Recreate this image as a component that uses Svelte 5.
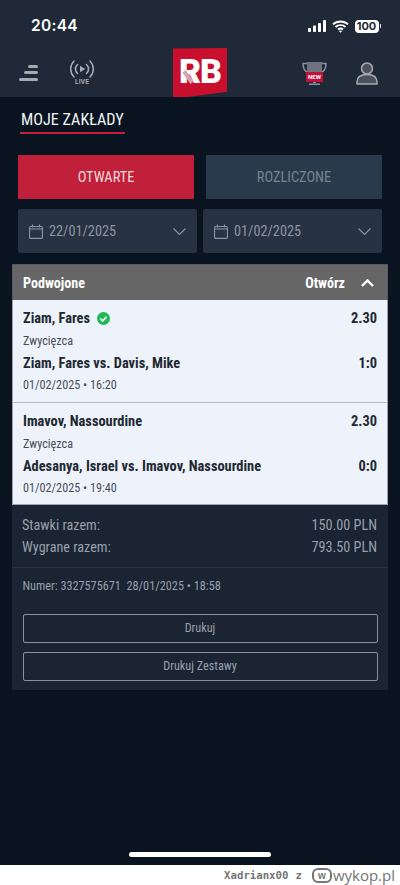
<script>
  const bets = [
    { name: 'Ziam, Fares', check: true, odds: '2.30', match: 'Ziam, Fares vs. Davis, Mike', score: '1:0', date: '01/02/2025 • 16:20' },
    { name: 'Imavov, Nassourdine', check: false, odds: '2.30', match: 'Adesanya, Israel vs. Imavov, Nassourdine', score: '0:0', date: '01/02/2025 • 19:40' }
  ];
  const dates = ['22/01/2025', '01/02/2025'];
</script>

<div class="page">
  <header class="top">
    <div class="status">
      <span class="time">20:44</span>
      <div class="sys">
        <svg width="18" height="12" viewBox="0 0 18 12"><rect x="0" y="8" width="3" height="4" rx=".8"/><rect x="5" y="5.500" width="3" height="6.500" rx=".8"/><rect x="10" y="3" width="3" height="9" rx=".8"/><rect x="15" y="0" width="3" height="12" rx=".8"/></svg>
        <svg class="wifi" width="17" height="13" viewBox="0 0 17 13"><path d="M1 4.400C5.200.6 11.800.6 16 4.400M3.500 7C6.400 4.500 10.600 4.500 13.500 7M6 9.500C7.400 8.400 9.600 8.400 11 9.500" fill="none" stroke="#fff" stroke-width="1.900"/><path d="M8.500 12.800 6.800 10.900c1-.7 2.400-.7 3.400 0z"/></svg>
        <span class="batt">100</span><i class="nub"></i>
      </div>
    </div>
    <nav class="nav">
      <div class="nav-left">
        <svg width="19" height="16" viewBox="0 0 19 16"><g fill="#a5abb4"><rect x="9" y="0" width="10" height="3" rx="1.500"/><rect x="5" y="6" width="14" height="3" rx="1.500"/><rect x="0" y="13" width="19" height="3" rx="1.500"/></g></svg>
        <div class="live">
          <svg width="26" height="18" viewBox="0 0 26 18" fill="none" stroke="#a5abb4" stroke-width="1.500" stroke-linecap="round"><path d="M5 1C.6 5.500.6 12.500 5 17M21 1c4.400 4.500 4.400 11.500 0 16M8.500 4.500c-2.500 2.700-2.500 6.300 0 9M17.500 4.500c2.500 2.700 2.500 6.300 0 9"/><path d="M11 5.800v6.400l5.200-3.200z" fill="#a5abb4" stroke="none"/></svg>
          <span>LIVE</span>
        </div>
      </div>
      <div class="nav-right">
        <div class="trophy">
          <svg width="25" height="25" viewBox="0 0 25 25"><path d="M5 1h15v8c0 4-3 7-7.500 7S5 13 5 9z" fill="#6d7480"/><path d="M5 2.500H1c0 5 1.500 8 5.500 9.500M20 2.500h4c0 5-1.500 8-5.500 9.500" fill="none" stroke="#8b919a" stroke-width="1.500"/><path d="M11 16h3v6h-3zM7 22.500h11v1.500H7z" fill="#8b919a"/></svg>
          <span>NEW</span>
        </div>
        <svg width="22" height="23" viewBox="0 0 22 23" fill="#4a525e" stroke="#a5abb4" stroke-width="1.500"><circle cx="11" cy="6.500" r="5.500"/><path d="M1 22v-2c0-5 4-7.500 10-7.500S21 15 21 20v2z" stroke-linejoin="round"/></svg>
      </div>
    </nav>
    <div class="logo"><span>RB</span><i class="slash"></i></div>
  </header>

  <main>
    <div class="title">MOJE ZAKŁADY</div>
    <div class="tabs">
      <button class="tab on">OTWARTE</button>
      <button class="tab">ROZLICZONE</button>
    </div>
    <div class="dates">
      {#each dates as d}
        <div class="date">
          <svg width="14" height="15" viewBox="0 0 14 15" fill="none" stroke="#8d95a1" stroke-width="1.100"><rect x=".6" y="2.500" width="12.800" height="11.900" rx="1"/><path d="M.6 5h12.800M3.500.5v3M10.500.5v3"/></svg>
          <span>{d}</span>
          <svg class="chev" width="13" height="7" viewBox="0 0 13 7" fill="none" stroke="#8d95a1" stroke-width="1.100"><path d="M.5.500l6 6 6-6"/></svg>
        </div>
      {/each}
    </div>

    <section class="card">
      <div class="card-head">
        <strong>Podwojone</strong>
        <div class="open">
          <strong>Otwórz</strong>
          <svg width="13" height="8" viewBox="0 0 13 8" fill="none" stroke="#fff" stroke-width="2.400"><path d="M1 7l5.500-5.500L12 7"/></svg>
        </div>
      </div>
      <div class="bets">
        {#each bets as b}
          <article class="bet">
            <div class="line l1">
              <b class="nm">{b.name}{#if b.check}<svg class="tick" width="13" height="13" viewBox="0 0 13 13"><circle cx="6.500" cy="6.500" r="6.500" fill="#1db954"/><path d="M3.300 6.700l2.300 2.300 4-4.300" fill="none" stroke="#fff" stroke-width="1.800"/></svg>{/if}</b>
              <b>{b.odds}</b>
            </div>
            <div class="sub">Zwycięzca</div>
            <div class="line l3"><b>{b.match}</b><b>{b.score}</b></div>
            <div class="sub when">{b.date}</div>
          </article>
        {/each}
      </div>
      <div class="sum">
        <div class="line"><span>Stawki razem:</span><span>150.00 PLN</span></div>
        <div class="line"><span>Wygrane razem:</span><span>793.50 PLN</span></div>
      </div>
      <div class="foot">
        <div class="numer">Numer: 3327575671&nbsp; 28/01/2025 • 18:58</div>
        <button class="print">Drukuj</button>
        <button class="print">Drukuj Zestawy</button>
      </div>
    </section>
    <div class="home"></div>
  </main>
  <footer class="mark">
    <span class="user">Xadrianx00</span><span class="z">z</span>
    <span class="wlogo">w</span><span class="wy">wykop.pl</span>
  </footer>
</div>

<style>
  :global(body) { margin: 0; background: #fff; }
  .page { width: 400px; height: 885px; display: flex; flex-direction: column; position: relative; overflow: hidden; font-family: Roboto, "Liberation Sans", sans-serif; font-stretch: 75%; }
  .top { height: 97px; background: #1f2937; flex: none; color: #fff; }
  .status { height: 43px; display: flex; justify-content: space-between; align-items: flex-end; padding: 0 19px 8px 31px; box-sizing: border-box; }
  .time { font: 600 15.500px/18px Inter, sans-serif; letter-spacing: .3px; }
  .sys { display: flex; align-items: center; height: 18px; fill: #fff; }
  .wifi { margin-left: 6px; }
  .batt { margin-left: 6px; background: #fff; color: #1f2937; border-radius: 4px; font: 700 11px/13px Inter, sans-serif; width: 24px; text-align: center; }
  .nub { width: 1.500px; height: 4px; background: #dfe2e6; margin-left: 1px; }
  .nav { height: 54px; padding: 6px 22px 0 19px; box-sizing: border-box; display: flex; justify-content: space-between; align-items: center; }
  .nav-left, .nav-right { display: flex; align-items: center; }
  .live { margin-left: 31px; display: flex; flex-direction: column; align-items: center; width: 26px; }
  .live span { font: 700 6.500px/7px Roboto, sans-serif; color: #a5abb4; letter-spacing: .2px; margin-top: 1px; }
  .trophy { position: relative; width: 25px; height: 25px; margin-right: 29px; }
  .trophy svg { display: block; }
  .trophy span { position: absolute; left: 4px; top: 11px; width: 17px; height: 10px; background: #c4103c; font: 700 6px/10px Roboto, sans-serif; color: #fff; text-align: center; }
  .logo { position: absolute; left: 173px; top: 48px; width: 54px; height: 51px; background: #c8102e; clip-path: polygon(0 1%, 100% 0, 100% 86%, 0 100%); display: flex; justify-content: center; padding-top: 3px; box-sizing: border-box; }
  .logo span { font: 900 34px/40px Roboto, sans-serif; color: #fff; letter-spacing: -1px; }
  .slash { position: absolute; left: 13px; top: 22px; width: 4px; height: 14px; background: #d9a4ad; transform: rotate(-35deg); }
  main { flex: 1; background: #0a1320; display: flex; flex-direction: column; position: relative; }
  .title { align-self: flex-start; margin: 12px 0 0 20px; padding: 0 1px 2px; width: 103px; font-size: 16.200px; line-height: 21px; color: #f1f3f5; border-bottom: 2px solid #c41e3a; white-space: nowrap; }
  .tabs { display: flex; gap: 12px; margin: 21px 18px 0; }
  .tab { flex: 1; height: 44px; padding: 0; border: 0; border-radius: 1px; background: #2a3a4d; color: #79828f; font: inherit; font-stretch: 75%; font-size: 14.400px; }
  .tab.on { background: #c0203a; color: #f3d9dd; }
  .dates { display: flex; gap: 6px; margin: 10px 18px 0; }
  .date { flex: 1; height: 44px; background: #273243; border-radius: 2px; display: flex; align-items: center; padding: 0 11px; color: #8d95a1; font-size: 14.300px; }
  .date span { margin-left: 6px; }
  .chev { margin-left: auto; }
  .card { margin: 11px 12px 0; background: #1a2433; display: flex; flex-direction: column; height: 426px; box-sizing: border-box; }
  .card-head { height: 36px; background: #666; border: 1px solid #565b63; border-bottom: 0; box-sizing: border-box; display: flex; justify-content: space-between; align-items: center; padding: 0 13px 0 10px; color: #fff; font-size: 14.100px; }
  .open { display: flex; align-items: center; gap: 16px; }
  .bets { background: #eef3fb; border: 1px solid #9aa4b0; border-top: 0; }
  .bet { height: 102px; padding: 4px 10px 0; box-sizing: border-box; color: #222831; }
  .bet + .bet { border-top: 1px solid #b3bcc7; }
  .line { display: flex; justify-content: space-between; align-items: center; }
  .bet b { font-weight: 700; font-size: 14.400px; }
  .l1 { height: 28px; }
  .nm { display: flex; align-items: center; }
  .tick { margin-left: 7px; }
  .sub { font-size: 12.200px; color: #474d57; height: 19px; line-height: 19px; }
  .l3 { height: 24px; }
  .when { margin-top: 1px; }
  .sum { height: 63px; padding: 9px 11px 0 10px; box-sizing: border-box; color: #99a0ab; font-size: 14.200px; line-height: 22px; border-bottom: 1px solid #273142; }
  .foot { padding: 0 10.500px; display: flex; flex-direction: column; }
  .numer { color: #99a0ab; font-size: 12.250px; line-height: 16px; margin: 10px 0 20px; white-space: nowrap; }
  .print { height: 28.500px; margin-bottom: 9.500px; padding: 0; background: transparent; border: 1px solid #8a919c; border-radius: 2px; color: #99a0ab; font: inherit; font-stretch: 75%; font-size: 12.200px; }
  .home { position: absolute; left: 129px; bottom: 8px; width: 142px; height: 5px; border-radius: 3px; background: #fff; }
  .mark { height: 20px; flex: none; background: #fff; display: flex; align-items: center; justify-content: flex-end; padding-right: 5px; color: #757575; }
  .user { font: 700 10.700px "DejaVu Sans Mono", monospace; }
  .z { font: 700 10.700px "DejaVu Sans Mono", monospace; margin: 0 10px 0 7px; }
  .wlogo { width: 20px; height: 15px; border: 2px solid #757575; border-radius: 6px; box-sizing: border-box; font: 900 10px/11px "Liberation Sans", sans-serif; text-align: center; }
  .wy { font: 400 15px "Open Sans", sans-serif; margin-left: 1px; }
</style>
